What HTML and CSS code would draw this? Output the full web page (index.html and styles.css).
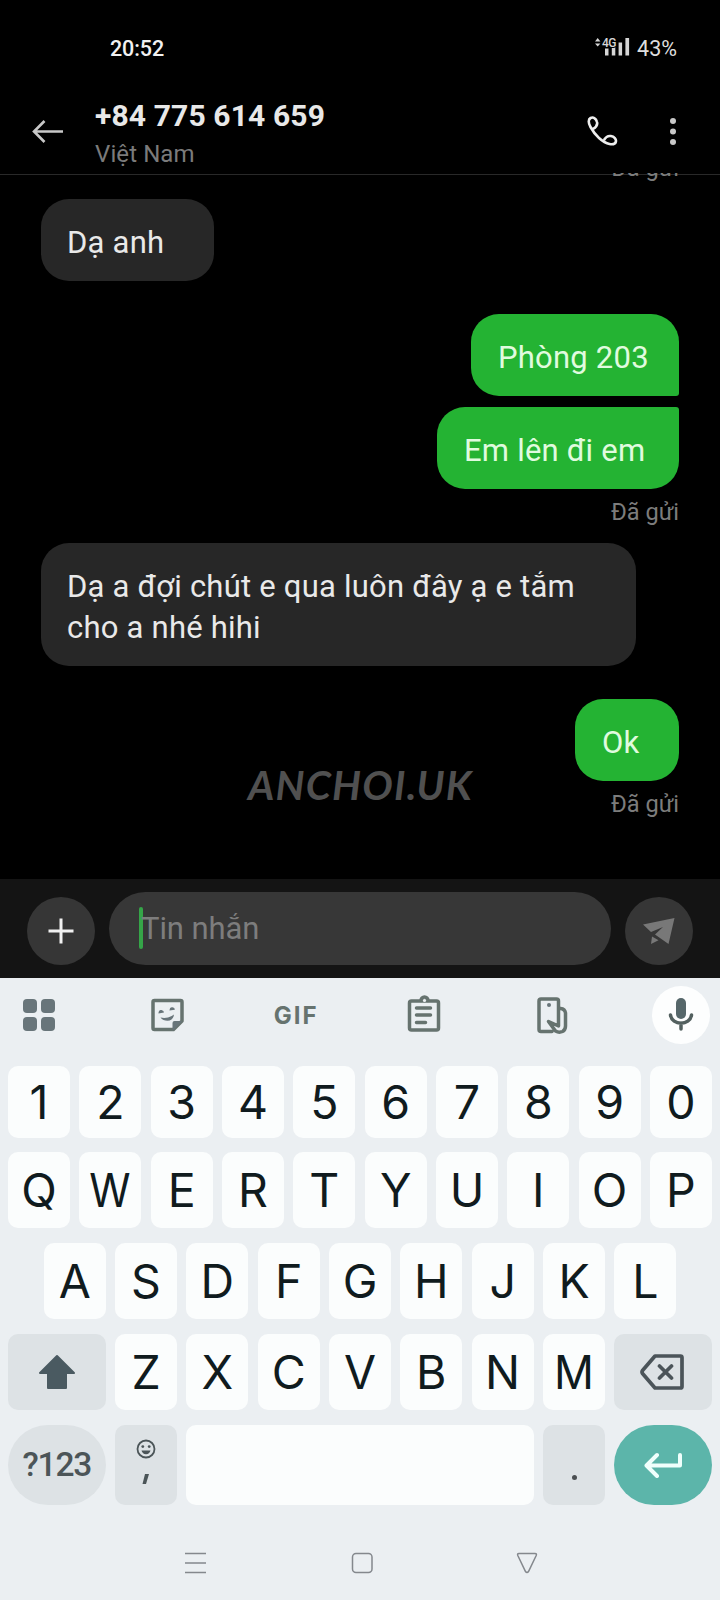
FILE: index.html
```html
<!DOCTYPE html>
<html lang="vi">
<head>
<meta charset="utf-8">
<title>Tin nhắn</title>
<link rel="stylesheet" href="styles.css">
</head>
<body>
<div class="phone">
  <header class="top">
    <div class="status">
      <span class="clock">20:52</span>
      <div class="status-right">
        <svg class="signal" width="36" height="22" viewBox="0 0 36 22"><path d="M1 5.500 3.700 2l2.700 3.500zM1 7.500 3.700 10.500 6.400 7.500z"/><path d="M11 12.500h3.500v7h-3.500zM17.800 10h3.500v9.500h-3.500zM24.600 6.500h3.500v13h-3.500zM31.400 2h3.700v17.500h-3.700z"/><text x="8" y="10.500">4G</text></svg>
        <span class="battery">43%</span>
      </div>
    </div>
    <div class="contact">
      <svg class="back" width="32" height="26" viewBox="0 0 32 26"><path d="M31 12.500H2M12.500 2 2 12.500l10.500 10.500"/></svg>
      <div class="who">
        <h1>+84 775 614 659</h1>
        <p>Việt Nam</p>
      </div>
      <svg class="call" width="31" height="32" viewBox="0 0 31 32"><path d="M6 13C8.500 11.500 11 9.500 10 6 9 2 6 .8 3.600 2 1 3.400 1.300 7 3.500 11 6 15.500 8.500 19 12 22c3 2.700 7 5.300 10.500 6 3 .6 5.500.3 6.300-2 .9-3-1.800-5.500-5-6-3-.4-5.300 1.300-6.800 4"/></svg>
      <svg class="more" width="8" height="30" viewBox="0 0 8 30"><circle cx="4" cy="4" r="3"/><circle cx="4" cy="14.500" r="3"/><circle cx="4" cy="25" r="3"/></svg>
    </div>
  </header>

  <main class="chat">
    <p class="sent first">Đã gửi</p>
    <div class="bubble in short">Dạ anh</div>
    <div class="bubble out room turn">Phòng 203</div>
    <div class="bubble out come">Em lên đi em</div>
    <p class="sent">Đã gửi</p>
    <div class="bubble in long">Dạ a đợi chút e qua luôn đây ạ e tắm<br>cho a nhé hihi</div>
    <div class="bubble out ok turn">Ok</div>
    <p class="sent">Đã gửi</p>
    <div class="watermark">ANCHOI.UK</div>
  </main>

  <div class="composer">
    <div class="round"><svg width="26" height="26" viewBox="0 0 26 26"><path class="plus" d="M13 .5v25M.5 13h25"/></svg></div>
    <div class="field"><i class="caret"></i><span>Tin nhắn</span></div>
    <div class="round send"><svg width="32" height="26" viewBox="0 0 32 26"><path class="plane" d="M0 6.500 31.500 0 25.500 26 12 16.500 20 9 8 14zM9 18.500l6.500 3.700L8 26z"/></svg></div>
  </div>

  <section class="keyboard">
    <div class="tools">
      <svg width="60" height="60" viewBox="0 0 60 60"><g class="fill"><rect x="14" y="14" width="14" height="14" rx="4"/><rect x="32" y="14" width="14" height="14" rx="4"/><rect x="14" y="32" width="14" height="14" rx="4"/><rect x="32" y="32" width="14" height="14" rx="4"/></g></svg>
      <svg width="60" height="60" viewBox="0 0 60 60"><path class="line" d="M16.500 15.500h26a1.500 1.500 0 0 1 1.500 1.500v19l-8.500 8.500h-19a1.500 1.500 0 0 1-1.500-1.500V17a1.500 1.500 0 0 1 1.500-1.500z"/><path class="fill" d="M34.500 46V38q0-2 2-2h8zM22.500 32.500q7.500 1.500 13.500-3-.8 6-6.500 6.300-4.500 0-7-3.300zM20.500 28.500q0-4 3-3.500 2.500.6 2.500 2.500zM31.500 25.500q.2-3.700 3-3.300 2.500.6 2.300 2.500z"/></svg>
      <div class="gif">GIF</div>
      <svg width="60" height="60" viewBox="0 0 60 60"><rect class="line" x="14.500" y="16" width="29" height="29" rx="2"/><path class="line" d="M21.500 23h14M21.500 30h14M21.500 37.500h9M26 15.500a3.500 3.500 0 0 1 7 0"/><circle class="hole" cx="29.500" cy="15.500" r="1.600"/></svg>
      <svg width="60" height="60" viewBox="0 0 60 60"><path class="line" d="M29 46.500H18a2 2 0 0 1-2-2V16a2 2 0 0 1 2-2h15.500a2 2 0 0 1 2 2v25L25.500 36.500l7 9.500q3.500 2 7 .5 3-1.500 3-5.500V28q-.5-4-5-4.500"/><circle class="fill" cx="26" cy="20" r="2"/></svg>
      <div class="mic"><svg width="26" height="34" viewBox="0 0 26 34"><rect class="dark" x="8" y="0" width="10" height="21" rx="5"/><path class="micline" d="M2.500 17c1.500 11 19.500 11 21 0M13 25v6"/></svg></div>
    </div>

    <div class="keys">
      <div class="row digits"><b>1</b><b>2</b><b>3</b><b>4</b><b>5</b><b>6</b><b>7</b><b>8</b><b>9</b><b>0</b></div>
      <div class="row"><b>Q</b><b><span class="w">W</span></b><b>E</b><b>R</b><b>T</b><b>Y</b><b>U</b><b>I</b><b>O</b><b>P</b></div>
      <div class="row home"><b>A</b><b>S</b><b>D</b><b>F</b><b>G</b><b>H</b><b>J</b><b>K</b><b>L</b></div>
      <div class="row">
        <b class="wide grey"><svg width="38" height="36" viewBox="0 0 38 36"><path class="shift" d="M19 2 36 19H28v15H10V19H2z"/></svg></b>
        <b>Z</b><b>X</b><b>C</b><b>V</b><b>B</b><b>N</b><b><span class="m">M</span></b>
        <b class="wide grey"><svg class="del" width="44" height="36" viewBox="0 0 44 36"><path class="erase" d="M15 2h25.500Q42 2 42 3.500v29Q42 34 40.500 34H15L2.500 19.500q-1-1.500 0-3zM19.500 12l12 12M31.500 12l-12 12"/></svg></b>
      </div>
      <div class="row last">
        <b class="wide grey pill symbols">?123</b>
        <b class="grey comma"><svg width="20" height="20" viewBox="0 0 20 20"><circle class="face" cx="10" cy="10" r="8.500"/><circle cx="6.800" cy="7.600" r="1.400"/><circle cx="13.200" cy="7.600" r="1.400"/><path d="M5.500 11.500h9q-1 3.700-4.500 3.700t-4.500-3.700z"/></svg><svg width="8" height="12" viewBox="0 0 8 12"><path d="M3 1h4L4 11H.500z"/></svg></b>
        <b class="space"></b>
        <b class="grey period"><i></i></b>
        <b class="wide pill enter"><svg width="38" height="26" viewBox="0 0 38 26"><path d="M36 3v10.500H3M13 3 2.500 13.500 13 24"/></svg></b>
      </div>
    </div>

    <nav class="nav">
      <svg width="22" height="22" viewBox="0 0 22 22"><path d="M0 1.500h21M0 11h21M0 20.500h21"/></svg>
      <svg width="22" height="22" viewBox="0 0 22 22"><rect x="1.500" y="1.500" width="19.500" height="19" rx="3.500"/></svg>
      <svg width="22" height="22" viewBox="0 0 22 22"><path d="M3 1.500h16q2 0 1.200 2l-7.700 16q-1.500 2-3 0l-7.700-16q-.8-2 1.200-2z"/></svg>
    </nav>
  </section>
</div>
</body>
</html>
```

FILE: styles.css
```css
* { box-sizing: border-box; }
body { margin: 0; background: #000; font-family: Roboto, "Noto Sans", sans-serif; }
h1, p { margin: 0; font-weight: 400; }
svg { display: block; flex: none; }
.phone { width: 720px; height: 1600px; display: flex; flex-direction: column; overflow: hidden; }

/* Status bar and contact header */
.top { height: 173px; flex: none; }
.status { height: 88px; padding: 34px 43px 0 110px; display: flex; justify-content: space-between; align-items: flex-start; color: #f1f1f1; font-size: 21.500px; line-height: 29px; }
.clock { font-weight: 500; letter-spacing: -.1px; }
.status-right { display: flex; gap: 7px; padding-top: 1px; color: #dedede; }
.signal { fill: #d6d6d6; margin-top: 1px; }
.signal text { font: 500 12px Roboto, sans-serif; letter-spacing: -.5px; stroke: #000; stroke-width: 2px; paint-order: stroke; }
.battery { font-weight: 400; line-height: 27px; }
.contact { display: flex; align-items: flex-start; padding: 9px 43px 0 32px; }
.back { margin-top: 22px; fill: none; stroke: #c8c8c8; stroke-width: 2.600; }
.who { margin-left: 31px; flex: 1; }
.who h1 { font-size: 30px; line-height: 36px; padding-top: 1px; font-weight: 700; letter-spacing: .13px; color: #e8e8e8; white-space: nowrap; }
.who p { font-size: 24px; line-height: 28px; margin-top: 6px; letter-spacing: .1px; color: #7b7b7b; }
.call { margin-top: 19px; fill: none; stroke: #eee; stroke-width: 2.600; stroke-linejoin: round; }
.more { margin: 20px 0 0 51px; fill: #c8c8c8; }

/* Conversation */
.chat { position: relative; height: 706px; flex: none; overflow: hidden; padding: 0 41px; display: flex; flex-direction: column; background: linear-gradient(#000 1px, #292929 1px, #292929 2px, #000 2px); }
.bubble { height: 82px; flex: none; padding: 23px 27px 18px; border-radius: 28px; font-size: 31px; letter-spacing: .22px; line-height: 41px; white-space: nowrap; }
.in { align-self: flex-start; padding-left: 26px; background: #272727; color: #e9e9e9; }
.out { align-self: flex-end; background: #24b333; color: #e0fbdf; }
.turn { margin-top: 33px; }
.short { width: 173px; margin-top: 17px; }
.room { width: 208px; border-bottom-right-radius: 3px; }
.come { width: 242px; margin-top: 10.500px; border-top-right-radius: 3px; }
.long { width: 595px; height: 123px; margin-top: 17.500px; }
.ok { width: 104px; }
.sent { align-self: flex-end; flex: none; height: 27px; margin-top: 10px; font-size: 23.600px; line-height: 27px; color: #7c7c7c; }
.first { margin-top: -18px; }
.watermark { position: absolute; left: 248px; top: 587px; font: italic 700 40.500px/50px Lato, sans-serif; letter-spacing: 1.200px; color: #505050; white-space: nowrap; }

/* Message composer */
.composer { height: 99px; flex: none; background: #141414; display: flex; align-items: flex-start; gap: 14px; padding: 13px 27px; }
.round { width: 68px; height: 68px; margin-top: 5px; flex: none; border-radius: 50%; background: #363636; display: flex; align-items: center; justify-content: center; }
.plus { stroke: #f1f1f1; stroke-width: 3; }
.plane { fill: #787878; }
.field { width: 502px; height: 73px; border-radius: 37px; background: #373737; display: flex; align-items: flex-start; padding: 15px 30px; color: #7d7d7d; font-size: 31px; line-height: 44px; letter-spacing: -.1px; }
.caret { width: 4px; height: 42px; border-radius: 2px; background: #35a548; margin-right: -2px; }

/* Keyboard */
.keyboard { height: 622px; flex: none; background: #ebeff2; }
.tools { height: 88px; padding: 7px 9px 0; display: flex; align-items: flex-start; justify-content: space-between; }
.fill { fill: #68757a; }
.line { fill: none; stroke: #66736f; stroke-width: 3.500; stroke-linejoin: round; stroke-linecap: round; }
.hole { fill: #ebeff2; }
.gif { width: 60px; height: 60px; display: flex; align-items: center; justify-content: center; color: #66736f; font: 700 24px/30px Inter, sans-serif; letter-spacing: 2px; padding-top: 1px; }
.mic { width: 58px; height: 58px; border-radius: 50%; background: #fdfefe; margin: 1px 1px 0 0; display: flex; align-items: center; justify-content: center; }
.dark { fill: #56676a; }
.micline { fill: none; stroke: #53605f; stroke-width: 3.500; stroke-linecap: round; }
.keys { padding: 0 8px; display: flex; flex-direction: column; gap: 14.500px; }
.row { height: 76.600px; display: flex; gap: 9.300px; }
.row b { flex: 1 1 0; display: flex; align-items: center; justify-content: center; border-radius: 10px; background: #fbfdfd; color: #101b1e; font: 400 46.500px/56px Inter, sans-serif; }
.digits { height: 72px; margin-bottom: -1px; }
.home { padding: 0 35.700px; }
.row .wide { flex: 0 0 97.700px; }
.row .grey { background: #dde2e5; }
.w { transform: scaleX(.9); }
.m { transform: scaleX(.95); }
.shift { fill: #4a5a61; stroke: #4a5a61; stroke-width: 2; stroke-linejoin: round; }
.del { margin-right: 2px; }
.erase { fill: none; stroke: #4b5459; stroke-width: 3.700; stroke-linecap: round; stroke-linejoin: round; }
.last { height: 80px; }
.row .pill { border-radius: 40px; }
.row .symbols { font: 500 33.500px/40px Roboto, sans-serif; letter-spacing: -1.200px; color: #4c5558; }
.row .comma, .row .period { flex: 0 0 62px; }
.row .comma { flex-direction: column; justify-content: flex-start; gap: 14px; padding-top: 14px; fill: #4b5558; }
.face { fill: none; stroke: #4b5558; stroke-width: 1.800; }
.period i { width: 5px; height: 5px; border-radius: 50%; background: #4b4f52; margin-top: 25px; }
.row .enter { background: #5cb5aa; }
.enter path { fill: none; stroke: #f0fffc; stroke-width: 4; stroke-linecap: round; stroke-linejoin: round; }
.nav { padding: 47px 182px 0 185px; display: flex; justify-content: space-between; fill: none; stroke: #84888d; stroke-width: 1.500; }
```
